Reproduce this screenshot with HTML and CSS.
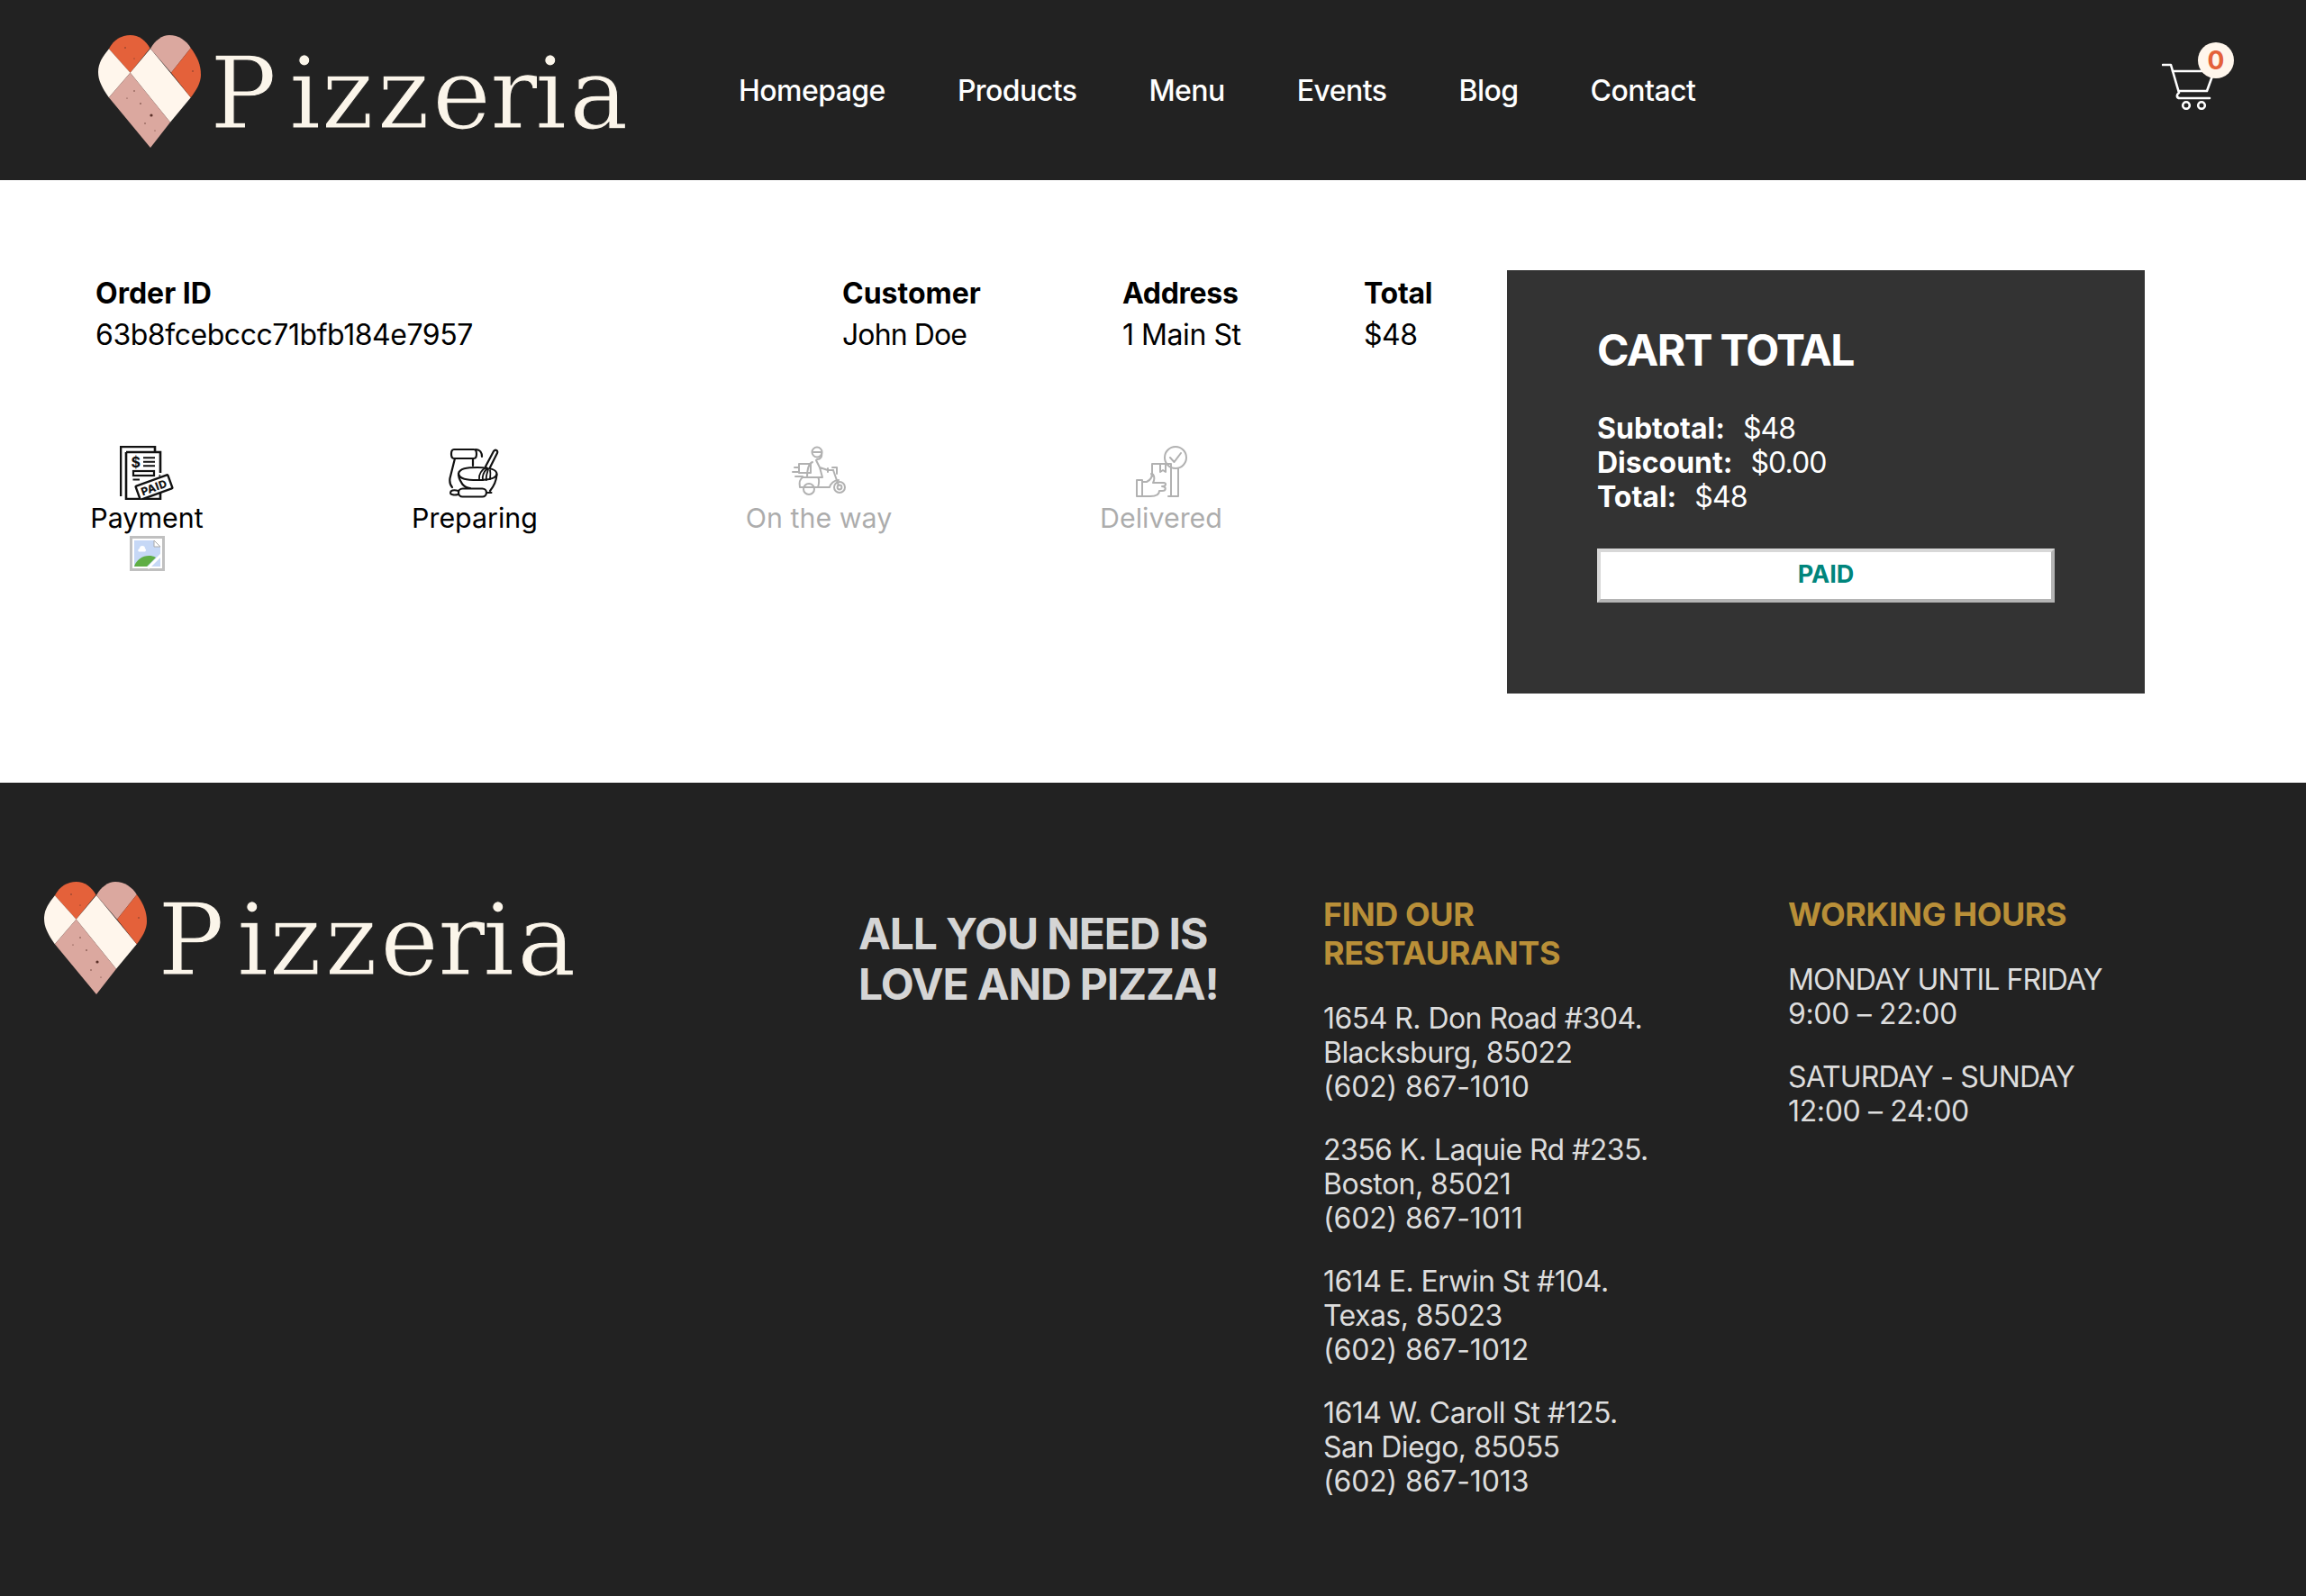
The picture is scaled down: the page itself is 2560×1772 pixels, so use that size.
FILE: index.html
```html
<!DOCTYPE html>
<html lang="en">
<head>
<meta charset="utf-8">
<title>Pizzeria</title>
<link rel="stylesheet" href="styles.css">
</head>
<body>
<svg class="defs" width="0" height="0" aria-hidden="true">
  <defs>
    <symbol id="logomark" viewBox="0 0 114 125">
      <path d="M11.900 15.300C17 5 26 0 35.600 0C45 0 53 6 57.500 14.500L35.600 41.700Z" fill="#e4613a"/>
      <path d="M11.900 15.300L35.600 41.700L11.900 69.300C4 58 0 50 0 41C0 31 5 24 11.900 15.300Z" fill="#fff6ec"/>
      <path d="M58 15L35.600 41.700L80 96.700L102.800 69.300Z" fill="#fff6ec"/>
      <path d="M58 15C63 6 71 0 79 0C89 0 98 6 102.800 14.300L81 41.700Z" fill="#dba89f"/>
      <path d="M102.800 14.300C110 24 114 33 114 44C114 53 109 61 102.800 69.300L81 41.700Z" fill="#e4613a"/>
      <path d="M35.600 41.700L80 96.700L58 125L11.900 69.300Z" fill="#dba89f"/>
      <g fill="#5a3028">
        <circle cx="59" cy="89" r="1.600"/><circle cx="40" cy="62" r=".7"/><circle cx="47" cy="76" r=".8"/>
        <circle cx="32" cy="70" r=".6"/><circle cx="52" cy="98" r=".7"/><circle cx="63" cy="106" r=".6"/>
        <circle cx="30" cy="14" r=".7"/><circle cx="40" cy="26" r=".6"/><circle cx="105" cy="40" r=".7"/>
      </g>
    </symbol>
  </defs>
</svg>
<header class="topbar">
  <a class="brand" href="#">
    <svg class="mark"><use href="#logomark"/></svg>
    <svg class="wordmark" viewBox="0 0 470 125"><text x="0 88 124 186 247 311 361 399" y="103">Pizzeria</text></svg>
  </a>
  <nav class="nav">
    <a href="#">Homepage</a>
    <a href="#">Products</a>
    <a href="#">Menu</a>
    <a href="#">Events</a>
    <a href="#">Blog</a>
    <a href="#">Contact</a>
  </nav>
  <a class="cart" href="#">
    <svg class="cart-icon" viewBox="0 0 60 52" fill="none" stroke="#fff" stroke-width="2.600" stroke-linecap="round" stroke-linejoin="round">
      <path d="M1 2H10L19 33C16 35 16 39 20 39H53"/>
      <path d="M12 9H58L50 31H19"/>
      <circle cx="27" cy="47" r="3.800"/><circle cx="44" cy="47" r="3.800"/>
    </svg>
    <span class="badge">0</span>
  </a>
</header>

<main class="order">
  <section class="order-left">
    <div class="info">
      <div class="cell c-id"><b>Order ID</b><span>63b8fcebccc71bfb184e7957</span></div>
      <div class="cell c-cust"><b>Customer</b><span class="name">John Doe</span></div>
      <div class="cell c-addr"><b>Address</b><span>1 Main St</span></div>
      <div class="cell c-total"><b>Total</b><span>$48</span></div>
    </div>
    <div class="steps">
      <div class="step s-pay">
        <svg class="step-icon" viewBox="0 0 60 60" fill="none" stroke="#111" stroke-width="2.600">
          <path d="M1 56V1H39V6M7 7H45V30M45 52V59H7V7"/>
          <path d="M26 13.300H39M26 17.800H39M26 22.300H39" stroke-width="2"/>
          <rect x="15" y="28" width="23" height="5" stroke-width="2.200"/>
          <path d="M14.500 37.500H22" stroke-width="2"/>
          <circle cx="44.300" cy="33" r=".6" stroke-width="1"/>
          <text class="ico-dollar" x="12.500" y="24">$</text>
          <g transform="rotate(-20 38 46)">
            <rect x="19" y="38" width="38" height="16" rx="1" fill="#fff" stroke-width="2.400"/>
            <text class="ico-stamp" x="38" y="50.500">PAID</text>
          </g>
        </svg>
        <span>Payment</span>
        <svg class="broken" viewBox="0 0 39 39" aria-hidden="true"><rect x="1.500" y="1.500" width="36" height="36" fill="#fff" stroke="#c0c0c0" stroke-width="3"/><path d="M5 5H27L34 12V34H5Z" fill="#c6d8f6"/><path d="M27 5L34 12H27Z" fill="#fff" stroke="#a9a9a9"/><path d="M5 34C8 24 20 19 29 24L19 34Z" fill="#5fae45"/><path d="M11 14a3 3 0 0 1 6 0a2 2 0 0 1 0 3.500h-7a2 2 0 0 1 1-3.500Z" fill="#fff"/><path d="M20 36L35 21" stroke="#fff" stroke-width="3"/></svg>
      </div>
      <div class="step s-prep">
        <svg class="step-icon" viewBox="0 0 60 60" fill="none" stroke="#111" stroke-width="2.200" stroke-linecap="round" stroke-linejoin="round">
          <path d="M7 4H29C33 4 33 14 29 14H7C3 14 3 4 7 4ZM31 4C36 4 38 8 38 12M28 14V22M8 14L2.500 36C2 40 3 44 5 46"/>
          <path d="M12 31C13 25 21 24 33 24C44 24 54 25 54.500 31C54 37 44 38 33 38C21 38 13 37 12 31Z"/>
          <path d="M12 32C13 40 18 47 25 47M54.500 32C54 38 52 44 47 50"/>
          <path d="M42 23L51 6C53 3.500 56 5 55 8L46.500 25" fill="#fff"/>
          <path d="M43 24C38 26 34 32 35 37M44 25C41 28 38 33 39 38M45 26C44 30 42 34 43 38M47 27C48 31 47 35 47 37" stroke-width="1.800"/>
          <rect x="12" y="47.500" width="31" height="9" rx="4.500" fill="#fff"/>
          <path d="M12 50C6 48 3 50 3 52C3 54.500 7 55 12 54M43 52H48.500" stroke-width="2"/>
        </svg>
        <span>Preparing</span>
      </div>
      <div class="step s-way pending">
        <svg class="step-icon" viewBox="0 0 60 60" fill="none" stroke="#111" stroke-width="2" stroke-linecap="round" stroke-linejoin="round">
          <circle cx="28" cy="7" r="5.500"/><path d="M24 7H33C34 12 32 15 28 15"/>
          <path d="M23 18C18 20 17 30 17 35H34L31 24L40 27H46M27 16L31 24M40 25V29"/>
          <path d="M45 24H50V31M46 27L52 44"/>
          <rect x="8" y="20" width="13" height="10"/><path d="M3 24H8M1 29H8M4 34H12"/>
          <path d="M12 35H29C31 37 30 46 28 46H9C8 41 9 37 12 35ZM28 46H42C43 42 47 38 52 38"/>
          <circle cx="19" cy="48" r="6"/><circle cx="53" cy="46" r="6"/><circle cx="53" cy="46" r="2.400"/>
        </svg>
        <span>On the way</span>
      </div>
      <div class="step s-del pending">
        <svg class="step-icon" viewBox="0 0 60 60" fill="none" stroke="#111" stroke-width="2" stroke-linecap="round" stroke-linejoin="round">
          <circle cx="46" cy="13" r="12"/><path d="M40 13L44.500 18L52 8"/>
          <path d="M20 20H41V26M20 20V34M29 20V29L32 27L35 29V20M41 26V56M49 25V56H38"/>
          <path d="M3 38H9V56H3ZM9 40H14C18 38 21 34 19 31C23 31 23 38 21 41H33C36 41 36 45 31 45C36 45 36 50 31 50H28C28 54 24 56 18 56H9"/>
        </svg>
        <span>Delivered</span>
      </div>
    </div>
  </section>
  <aside class="summary">
    <h2>CART TOTAL</h2>
    <p><b>Subtotal:</b>$48</p>
    <p><b>Discount:</b>$0.00</p>
    <p><b>Total:</b>$48</p>
    <button class="paid" type="button">PAID</button>
  </aside>
</main>

<footer class="footer">
  <a class="brand brand-foot" href="#">
    <svg class="mark"><use href="#logomark"/></svg>
    <svg class="wordmark" viewBox="0 0 470 125"><text x="0 88 124 186 247 311 361 399" y="103">Pizzeria</text></svg>
  </a>
  <h2 class="slogan">ALL YOU NEED IS<br>LOVE AND PIZZA!</h2>
  <div class="col col-rest">
    <h3>FIND OUR<br>RESTAURANTS</h3>
    <p>1654 R. Don Road #304.<br>Blacksburg, 85022<br><span class="ph">(602) 867-1010</span></p>
    <p>2356 K. Laquie Rd #235.<br>Boston, 85021<br><span class="ph">(602) 867-1011</span></p>
    <p>1614 E. Erwin St #104.<br>Texas, 85023<br><span class="ph">(602) 867-1012</span></p>
    <p>1614 W. Caroll St #125.<br>San Diego, 85055<br><span class="ph">(602) 867-1013</span></p>
  </div>
  <div class="col col-hours">
    <h3>WORKING HOURS</h3>
    <p class="upper">MONDAY UNTIL FRIDAY<br><span class="time">9:00 – 22:00</span></p>
    <p class="upper">SATURDAY - SUNDAY<br><span class="time">12:00 – 24:00</span></p>
  </div>
</footer>
</body>
</html>
```
FILE: styles.css
```css
* { box-sizing: border-box; }
html, body { margin: 0; padding: 0; }
body { font-family: Inter, "Liberation Sans", sans-serif; color: #000; background: #fff; }
a { color: inherit; text-decoration: none; }
.defs { display: block; height: 0; }

.topbar { height: 200px; background: #222; color: #fff; display: flex; align-items: center; padding: 3px 0 0 109px; position: relative; }
.brand { display: flex; flex: none; align-items: flex-start; }
.mark { width: 114px; height: 125px; flex: none; }
.wordmark { width: 470px; height: 125px; flex: none; margin-left: 10px; overflow: visible; }
.wordmark text { font-family: "DejaVu Serif", serif; font-size: 110px; fill: #fbf5ea; stroke: #222; stroke-width: 1.2px; paint-order: fill stroke; }
.nav { display: flex; gap: 80px; margin-left: 117px; margin-top: -3px; font-size: 32px; font-weight: 500; letter-spacing: -0.55px; }
.cart { position: absolute; left: 2400px; top: 45px; width: 82px; height: 80px; }
.cart-icon { position: absolute; left: 0; top: 25px; width: 60px; height: 52px; }
.badge { position: absolute; left: 40px; top: 2px; width: 40px; height: 40px; border-radius: 50%; background: #fff6ec; color: #e4613a; font-size: 28px; font-weight: 700; display: flex; align-items: center; justify-content: center; }

.order { height: 669px; display: flex; padding: 100px 0 0 106px; }
.order-left { width: 1567px; flex: none; padding-top: 3px; }
.info { display: flex; font-size: 32px; line-height: 46px; letter-spacing: -0.45px; }
.cell { display: flex; flex-direction: column; }
.cell b { font-weight: 700; letter-spacing: 0; }
.name { letter-spacing: -0.9px; }
.c-id { width: 829px; }
.c-cust { width: 311px; }
.c-addr { width: 268px; }
.c-addr b, .c-total b { letter-spacing: -0.3px; }
.steps { display: flex; gap: 231px; margin: 100px 0 0 -6px; font-size: 30.4px; line-height: 40px; }
.step { display: flex; flex: none; flex-direction: column; align-items: center; white-space: nowrap; }
.step span { display: block; }
.step-icon { width: 60px; height: 60px; }
.ico-dollar { font-family: Inter, sans-serif; font-size: 16px; font-weight: 700; fill: #111; stroke: none; }
.ico-stamp { font-family: Inter, sans-serif; font-size: 12px; font-weight: 800; fill: #111; stroke: none; text-anchor: middle; letter-spacing: .5px; }
.pending { opacity: .32; }
.broken { width: 39px; height: 39px; }
.s-pay { width: 126px; }
.s-prep { width: 140px; }
.s-way { width: 162px; }
.s-del { width: 136px; }

.summary { width: 708px; height: 470px; background: #333; color: #fff; padding: 59px 100px 0; flex: none; }
.summary h2 { margin: 0 0 38px; font-size: 48px; line-height: 60px; font-weight: 700; letter-spacing: -1.7px; }
.summary p { margin: 0; font-size: 32px; line-height: 38px; letter-spacing: -0.9px; }
.summary b { font-weight: 700; margin-right: 20px; letter-spacing: 0; }
.paid { display: block; width: 508px; height: 60px; margin-top: 38px; background: #fff; color: #00857c; font-family: inherit; font-size: 27px; font-weight: 700; border: 4px solid; border-color: #d8d8d8 #b4b4b4 #b4b4b4 #d8d8d8; padding: 0 0 3px; }

.footer { height: 903px; background: #222; color: #ddd; position: relative; padding: 110px 0 0 49px; }
.brand-foot .wordmark { margin-left: 12px; }
.slogan { position: absolute; left: 953px; top: 140px; margin: 0; font-size: 48px; line-height: 56px; font-weight: 700; color: #d5d5d5; letter-spacing: -1.1px; }
.col { position: absolute; top: 125px; font-size: 32px; line-height: 38px; }
.col h3 { margin: 0 0 32px; font-size: 36px; line-height: 43px; color: #b98f38; font-weight: 700; letter-spacing: -0.45px; }
.col p { margin: 0 0 32px; letter-spacing: -0.55px; }
.col p.upper { letter-spacing: -0.9px; }
.col .ph { letter-spacing: -0.15px; }
.col .time { letter-spacing: -0.35px; }
.col-rest { left: 1469px; width: 450px; }
.col-hours { left: 1985px; width: 480px; }
```
